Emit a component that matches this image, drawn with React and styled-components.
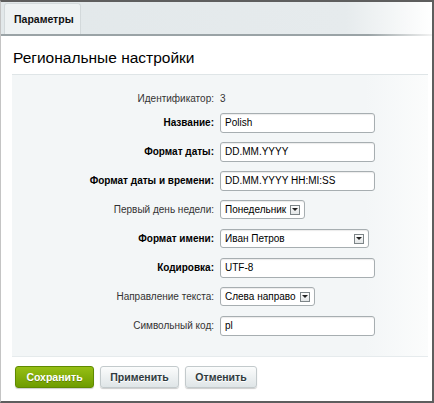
import { Fragment } from 'react'
import styled, { createGlobalStyle } from 'styled-components'

const Global = createGlobalStyle`
  html, body { margin: 0; padding: 0; background: #fff; }
  body { font-family: "Liberation Sans", Arial, sans-serif; }
`

const Frame = styled.div`
  width: 434px;
  height: 403px;
  box-sizing: border-box;
  border: 2px solid #5e5e5e;
  border-left: 1px solid #c4c4c4;
  background: #fff;
  display: flex;
  flex-direction: column;
`

const TabBar = styled.div`
  height: 32px;
  display: flex;
  align-items: flex-end;
  padding-left: 3px;
  background: linear-gradient(to right, #e2e8ea 0%, #e6ebed 80%, #fff 100%);
  border-bottom: 2px solid #a9b1b4;
  border-image: linear-gradient(to right, #9aa3a6 85%, #f4f4f4 100%) 1;
`

const Tab = styled.div`
  width: 77px;
  height: 31px;
  box-sizing: border-box;
  background: #eef2f3;
  border: 1px solid #d3d9db;
  border-bottom: none;
  border-radius: 3px 3px 0 0;
  font-size: 10.5px;
  font-weight: bold;
  color: #111;
  display: flex;
  align-items: center;
  padding-left: 9px;
`

const Title = styled.h1`
  margin: 0;
  padding: 13px 0 0 12px;
  height: 38px;
  box-sizing: border-box;
  font-size: 15.5px;
  font-weight: normal;
  color: #000;
`

const Panel = styled.div`
  margin: 0 4px 0 11px;
  height: 283px;
  box-sizing: border-box;
  padding-top: 13px;
  background: linear-gradient(to right, #f3f6f7 85%, #fbfcfc 100%);
  border-top: 1px solid #dfe5e7;
  border-bottom: 1px solid #e6ebed;
  display: grid;
  grid-template-columns: 202px 1fr;
  grid-template-rows: 20px repeat(8, 29px);
  column-gap: 6px;
  align-items: center;
`

const Label = styled.label`
  text-align: right;
  font-size: 10px;
  font-weight: ${p => (p.$bold ? 'bold' : 'normal')};
  color: ${p => (p.$bold ? '#000' : '#333')};
  white-space: nowrap;
`

const Value = styled.span`
  font-size: 10px;
  color: #333;
`

const Input = styled.div`
  width: ${p => p.$w || 155}px;
  height: ${p => (p.$select ? 19 : 20)}px;
  box-sizing: border-box;
  border: 1px solid #a7aeb1;
  border-radius: 3px;
  background: #fff;
  box-shadow: inset 0 1px 1px rgba(0, 0, 0, 0.08);
  font-size: 10px;
  color: #000;
  padding: 0 4px;
  display: flex;
  align-items: center;
  justify-content: space-between;
  white-space: nowrap;
`

const Arrow = styled.span`
  width: 10px;
  height: 10px;
  flex: none;
  box-sizing: border-box;
  border: 1px solid #7d8588;
  background: linear-gradient(#fdfdfd, #e3e6e7);
  display: flex;
  align-items: center;
  justify-content: center;
  margin-left: 3px;
  &::after {
    content: '';
    border-left: 3px solid transparent;
    border-right: 3px solid transparent;
    border-top: 3px solid #222;
  }
`

const Footer = styled.div`
  display: flex;
  gap: 6px;
  padding: 9px 0 0 14px;
`

const Button = styled.button`
  width: ${p => p.$w}px;
  height: 22px;
  border-radius: 3px;
  font-family: inherit;
  font-size: 10.5px;
  font-weight: bold;
  padding: 0;
  cursor: pointer;
  border: 1px solid ${p => (p.$primary ? '#5f8a00' : '#c3cacc')};
  color: ${p => (p.$primary ? '#fff' : '#2f3a3d')};
  background: ${p =>
    p.$primary
      ? 'linear-gradient(#96bf14, #6e9c00)'
      : 'linear-gradient(#fbfcfc, #dfe5e7)'};
  box-shadow: 0 1px 1px rgba(0, 0, 0, 0.2);
  text-shadow: ${p => (p.$primary ? '0 1px 0 rgba(0,0,0,0.25)' : '0 1px 0 #fff')};
`

const rows = [
  { label: 'Идентификатор:', text: '3' },
  { label: 'Название:', bold: true, value: 'Polish' },
  { label: 'Формат даты:', bold: true, value: 'DD.MM.YYYY' },
  { label: 'Формат даты и времени:', bold: true, value: 'DD.MM.YYYY HH:MI:SS' },
  { label: 'Первый день недели:', value: 'Понедельник', select: true, w: 85 },
  { label: 'Формат имени:', bold: true, value: 'Иван Петров', select: true, w: 149 },
  { label: 'Кодировка:', bold: true, value: 'UTF-8' },
  { label: 'Направление текста:', value: 'Слева направо', select: true, w: 95 },
  { label: 'Символьный код:', value: 'pl' },
]

export default function App() {
  return (
    <>
      <Global />
      <Frame>
        <TabBar>
          <Tab>Параметры</Tab>
        </TabBar>
        <Title>Региональные настройки</Title>
        <Panel>
          {rows.map(r => (
            <Fragment key={r.label}>
              <Label $bold={r.bold}>{r.label}</Label>
              {r.text ? (
                <Value>{r.text}</Value>
              ) : (
                <Input $w={r.w} $select={r.select}>
                  {r.value}
                  {r.select && <Arrow />}
                </Input>
              )}
            </Fragment>
          ))}
        </Panel>
        <Footer>
          <Button $primary $w={79}>Сохранить</Button>
          <Button $w={79}>Применить</Button>
          <Button $w={72}>Отменить</Button>
        </Footer>
      </Frame>
    </>
  )
}
